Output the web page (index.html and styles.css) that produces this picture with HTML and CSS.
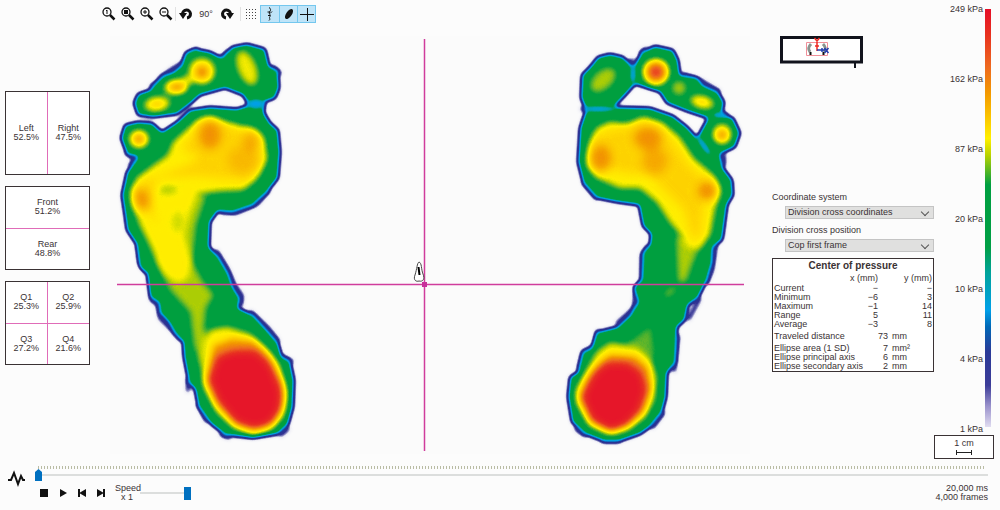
FILE: index.html
```html
<!DOCTYPE html>
<html lang="en">
<head>
<meta charset="utf-8">
<title>Foot pressure viewer</title>
<link rel="stylesheet" href="styles.css">
</head>
<body>
<div class="app">
  <main class="workspace">
    <div class="toolbar" role="toolbar" aria-label="View tools">
      <button class="tool" aria-label="Actual size"><svg viewBox="0 0 16 16"><circle cx="6" cy="6" r="4"/><path d="M5 5l1-1v4"/><path class="thick" d="M9 9l4.500 4.500"/></svg></button>
      <button class="tool" aria-label="Fit to window"><svg viewBox="0 0 16 16"><circle cx="6" cy="6" r="4"/><path class="solid" d="M4 4h4v4h-4z"/><path class="thick" d="M9 9l4.500 4.500"/></svg></button>
      <button class="tool" aria-label="Zoom in"><svg viewBox="0 0 16 16"><circle cx="6" cy="6" r="4"/><path d="M4 6h4M6 4v4"/><path class="thick" d="M9 9l4.500 4.500"/></svg></button>
      <button class="tool" aria-label="Zoom out"><svg viewBox="0 0 16 16"><circle cx="6" cy="6" r="4"/><path d="M4 6h4"/><path class="thick" d="M9 9l4.500 4.500"/></svg></button>
      <span class="divider"></span>
      <button class="tool" aria-label="Rotate left"><svg viewBox="0 0 16 16"><path class="turn" d="M4.500 8a4 4 0 1 1 4.500 4"/><path class="solid" d="M1 7h8l-4 6z"/></svg></button>
      <span class="angle">90°</span>
      <button class="tool" aria-label="Rotate right"><svg viewBox="0 0 16 16"><path class="turn" d="M11.500 8a4 4 0 1 0 -4.500 4"/><path class="solid" d="M15 7h-8l4 6z"/></svg></button>
      <span class="divider"></span>
      <button class="tool" aria-label="Show grid"><svg viewBox="0 0 16 16"><path class="dots" d="M3 3.500h12M3 6.500h12M3 9.500h12M3 12.500h12"/></svg></button>
      <div class="toggles">
        <button class="toggle" aria-pressed="true" aria-label="Show trajectory"><svg viewBox="0 0 16 16"><path d="M7 1.500c2 1 2 3 .5 4.500s2 3 .5 4.500 1 2.500-1 4M5.500 6h2.500M10 5.500l-2 2M6 9.500h2"/></svg></button>
        <button class="toggle" aria-pressed="true" aria-label="Show ellipse"><svg viewBox="0 0 16 16"><ellipse class="solid" cx="8" cy="8" rx="2.800" ry="5.800" transform="rotate(35 8 8)"/></svg></button>
        <button class="toggle" aria-pressed="true" aria-label="Show division cross"><svg viewBox="0 0 16 16"><path d="M1 8.500h14M8.500 2v13"/></svg></button>
      </div>
    </div>

    <aside class="shares">
      <section class="share columns"><p>Left<br>52.5%</p><p>Right<br>47.5%</p></section>
      <section class="share rows"><p>Front<br>51.2%</p><p>Rear<br>48.8%</p></section>
      <section class="share quads"><p>Q1<br>25.3%</p><p>Q2<br>25.9%</p><p>Q3<br>27.2%</p><p>Q4<br>21.6%</p></section>
    </aside>

    <svg class="stage" viewBox="110 36 640 418" role="img" aria-label="Pressure map of both feet">
      <defs>
        <filter id="palette" x="0" y="0" width="1" height="1" color-interpolation-filters="sRGB">
          <feComponentTransfer>
            <feFuncR type="table" tableValues=".988 .93 .5 .2 .16 .14 .05 0 0 0 0 0 .37 .72 1 1 .98 .953 .933 .91 .902"/>
            <feFuncG type="table" tableValues=".988 .93 .5 .2 .2 .22 .45 .63 .64 .624 .624 .624 .71 .82 .94 .85 .745 .596 .416 .19 .07"/>
            <feFuncB type="table" tableValues=".988 .96 .74 .58 .57 .6 .76 .91 .7 .27 .25 .25 .17 0 0 0 0 0 .12 .13 .17"/>
          </feComponentTransfer>
        </filter>
        <filter id="edge" x="-.1" y="-.1" width="1.200" height="1.200" color-interpolation-filters="sRGB"><feGaussianBlur stdDeviation="2.300"/></filter>
        <filter id="soft" x="-1" y="-1" width="3" height="3" color-interpolation-filters="sRGB"><feGaussianBlur stdDeviation="3"/></filter>
        <filter id="softer" x="-1" y="-1" width="3" height="3" color-interpolation-filters="sRGB"><feGaussianBlur stdDeviation="5"/></filter>
      </defs>
      <g filter="url(#palette)">
        <rect x="110" y="36" width="640" height="418" fill="#000"/>
        <g class="fringe" filter="url(#edge)">
          <path d="M150 87L158 82 161 77 172 69 184 62 187 54 198 49M221 58L229 51M272 66L281 74M126 152L135 160 129 166M138 244L140 262 147 273M150 298L158 305 160 318 172 330 181 340M188 378V392M198 404L207 422M220 434L230 438M269 190L257 204 236 213 220 212M216 250L228 270 234 284 242 296 241 306M250 311L268 328 279 342M282 356L293 362M289 428L280 436M628 62L634 60M640 54L646 48M682 74L702 81 720 92M724 154L724 166M716 244L712 270 706 284M700 298L688 320M678 335L674 372M664 412L652 428M602 441H620M575 428L586 436M579 370L583 352 595 346 598 330M616 324L634 308 636 290 642 280 642 255 648 246M583 182L597 199"/>
        </g>
        <g filter="url(#edge)" fill="#878787" fill-rule="evenodd">
          <path d="M134 103L138 94 150 90 153 86 160 79 163 76 173 72 182 65 186 53 195 49 210 52 222 58 232 47 247 44 265 49 269 66 278 71 279 88 275 98 264 102 264 113 270 123 278 130 280 152 278 178 267 192 253 205 233 212 218 211 210 222 209 247 218 256 228 273 233 287 240 298 238 308 253 315 267 330 278 343 282 357 290 361 294 380 293 407 288 425 278 434 253 438 225 435 210 423 198 405 195 389 189 383 184 357 183 342 175 333 169 323 160 313 159 303 150 297 147 273 140 267 137 245 127 230 125 215 122 195 127 172 138 157 127 154 121 138 125 125 138 122 152 123 162 132 177 122 190 110 210 107 237 109 249 105 243 95 225 88 200 95 190 104 177 114 153 117 138 115Z"/>
          <path d="M582 75L590 67 598 57 610 54 623 57 633 67 642 52 655 46 673 50 678 60 680 75 697 78 703 85 718 92 724 102 722 114 733 118 740 133 735 147 720 154 723 168 732 180 733 195 727 205 723 235 722 240 713 247 712 263 707 280 698 298 688 305 685 320 677 327 676 347 675 363 667 373 666 397 662 412 650 427 640 434 620 441 603 441 585 434 572 422 568 397 570 377 578 372 583 352 592 348 597 332 617 327 630 315 638 302 634 287 642 280 643 253 650 244 651 234 643 226 639 205 617 202 597 198 583 182 578 162 580 128 586 110 581 98ZM614 107L650 108 673 116 687 127 697 138 708 118 687 111 667 103 660 92 635 84 628 92Z"/>
        </g>
        <g class="joints" filter="url(#edge)">
          <ellipse cx="256" cy="104" rx="9" ry="5"/>
          <ellipse cx="598" cy="109" rx="18" ry="3"/>
          <ellipse cx="633" cy="74" rx="3" ry="10"/>
          <ellipse cx="720" cy="115" rx="8" ry="3"/>
          <ellipse cx="704" cy="146" rx="3" ry="12" transform="rotate(-35 704 146)"/>
        </g>
        <g class="mild" filter="url(#soft)">
          <path d="M190 190L206 196 196 225 192 262 203 282 214 295 206 308 204 330 214 340 201 365 194 345 190 312 170 290 158 262 175 215Z"/>
          <ellipse class="bright" cx="247" cy="68" rx="9" ry="18" transform="rotate(-22 247 68)"/>
          <ellipse cx="603" cy="80" rx="15" ry="9" transform="rotate(-42 603 80)"/>
          <circle cx="679" cy="88" r="7"/>
          <path d="M676 235L702 240 692 265 686 282 678 282Z"/>
          <ellipse class="faint" cx="670" cy="292" rx="8" ry="4" transform="rotate(-35 670 292)"/>
          <path class="faint" d="M625 345L651 326 655 358Z"/>
        </g>
        <g class="warm" filter="url(#soft)">
          <path d="M198 120L210 117 223 123 250 128 263 138 267 158 257 178 243 190 220 191 197 194 190 212 184 235 191 262 188 278 178 283 165 275 157 262 150 245 140 225 133 205 132 190 137 178 150 168 168 155 173 142Z"/>
          <path d="M210 330L227 327 250 334 266 348 279 365 286 393 282 416 270 429 253 434 234 427 217 412 204 387 201 363 204 343Z"/>
          <path d="M590 145L597 128 610 122 627 125 643 117 663 123 680 138 693 158 713 175 720 190 715 208 710 235 700 248 688 248 681 235 670 222 657 202 640 188 620 188 597 178 588 165Z"/>
          <path d="M597 352L610 343 637 347 650 357 656 377 654 400 645 417 627 429 610 433 590 425 577 403 576 390 587 370Z"/>
          <circle cx="202" cy="71" r="13"/>
          <path d="M168 85L195 72 198 80 172 92Z"/>
          <ellipse cx="176" cy="87" rx="12" ry="7" transform="rotate(-10 176 87)"/>
          <ellipse cx="157" cy="104" rx="13" ry="7" transform="rotate(-8 157 104)"/>
          <ellipse cx="139" cy="139" rx="10" ry="9"/>
          <circle cx="656" cy="72" r="13"/>
          <ellipse cx="702" cy="102" rx="12" ry="6" transform="rotate(15 702 102)"/>
          <ellipse cx="722" cy="134" rx="9" ry="10"/>
        </g>
        <g class="mild" filter="url(#soft)">
          <ellipse cx="168" cy="190" rx="9" ry="4"/>
          <ellipse cx="196" cy="154" rx="4" ry="4" opacity=".5"/>
          <ellipse cx="178" cy="222" rx="6" ry="10" opacity=".6"/>
        </g>
        <g class="gold" filter="url(#softer)">
          <path d="M200 125L222 123 258 139 261 163 247 181 195 176 158 178 150 200 158 225 150 215 138 200 142 182 180 168 198 160 182 148Z"/>
          <path d="M594 137L612 130 645 123 672 140 690 167 713 184 704 205 700 238 692 238 684 210 650 176 620 172 593 164Z"/>
        </g>
        <g class="orange" filter="url(#softer)">
          <ellipse cx="210" cy="135" rx="12" ry="15"/>
          <ellipse cx="251" cy="141" rx="9" ry="11" opacity=".7"/>
          <ellipse cx="243" cy="160" rx="16" ry="14" opacity=".5"/>
          <ellipse cx="142" cy="199" rx="8" ry="12" transform="rotate(-15 142 199)"/>
          <ellipse cx="601" cy="158" rx="11" ry="14"/>
          <ellipse cx="648" cy="138" rx="15" ry="12"/>
          <ellipse cx="655" cy="161" rx="14" ry="14" opacity=".7"/>
          <circle cx="707" cy="191" r="10"/>
        </g>
        <g class="orange" filter="url(#soft)">
          <circle cx="202" cy="72" r="7"/>
          <ellipse cx="177" cy="87" rx="8" ry="4"/>
          <ellipse cx="157" cy="104" rx="6" ry="3" opacity=".5"/>
          <circle cx="139" cy="139" r="5"/>
          <circle cx="707" cy="191" r="5" opacity=".6"/>
          <circle cx="656" cy="72" r="9"/>
          <circle cx="722" cy="135" r="5"/>
          <ellipse cx="702" cy="102" rx="5" ry="2" opacity=".5"/>
          <path d="M213 345L232 338 253 341 268 356 281 382 282 402 273 422 254 428 237 423 217 402 208 380Z"/>
          <path d="M597 366L610 354 636 356 648 367 651 388 643 410 626 424 611 429 592 420 581 397 586 382Z"/>
        </g>
        <g class="hot" filter="url(#softer)">
          <circle cx="656" cy="72" r="7" opacity=".8"/>
          <path d="M217 356L234 350 256 350 270 363 282 390 281 410 269 425 254 429 236 423 219 403 208 380Z"/>
          <path d="M593 374L606 362 628 362 642 372 647 390 640 411 627 425 611 431 592 421 581 397Z"/>
        </g>
      </g>
      <g class="cross">
        <path d="M117 284.500H744M424.500 39V451"/>
        <rect x="422" y="282" width="5" height="5"/>
      </g>
      <path class="cop" d="M419 262C417 263 417 269 415 275C413 280 416 282 419 281C423 282 425 279 423 274C421 269 422 263 419 262Z"/>
      <path class="cop-track" d="M418.500 267l1 8"/>
    </svg>

    <section class="panel">
      <svg class="minimap" viewBox="0 0 84 34" role="img" aria-label="Sensor plate overview">
        <path class="plate" d="M2.500 3.500h80v24.500h-80z"/>
        <path class="pin" d="M76 28v6"/>
        <path class="area" d="M27.500 8.500h21v13h-21z"/>
        <path class="prints" d="M32 10c-3 3-3 5-1 8M44 10c3 3 3 5 1 8"/>
        <path class="heels" d="M31.500 18v3M44.500 18v3"/>
        <path class="y-axis" d="M38 17V8M35.500 4l2.500 3 2.500-3M36 12h4"/>
        <path class="x-axis" d="M38 16h8M43 14v4M45.500 14l4 5M49.500 14l-4 5"/>
      </svg>

      <div class="field">
        <label for="coords">Coordinate system</label>
        <span class="picker"><select id="coords"><option>Division cross coordinates</option></select></span>
      </div>
      <div class="field">
        <label for="position">Division cross position</label>
        <span class="picker"><select id="position"><option>Cop first frame</option></select></span>
      </div>

      <div class="pressure">
        <table class="axes">
          <caption>Center of pressure</caption>
          <thead><tr><td></td><th scope="col">x (mm)</th><th scope="col">y (mm)</th></tr></thead>
          <tbody>
            <tr><th scope="row">Current</th><td>−</td><td>−</td></tr>
            <tr><th scope="row">Minimum</th><td>−6</td><td>3</td></tr>
            <tr><th scope="row">Maximum</th><td>−1</td><td>14</td></tr>
            <tr><th scope="row">Range</th><td>5</td><td>11</td></tr>
            <tr><th scope="row">Average</th><td>−3</td><td>8</td></tr>
          </tbody>
        </table>
        <table class="totals">
          <colgroup><col class="name"><col class="amount"><col></colgroup>
          <tbody><tr><th scope="row">Traveled distance</th><td>73</td><td>mm</td></tr></tbody>
          <tbody>
            <tr><th scope="row">Ellipse area (1 SD)</th><td>7</td><td>mm²</td></tr>
            <tr><th scope="row">Ellipse principal axis</th><td>6</td><td>mm</td></tr>
            <tr><th scope="row">Ellipse secondary axis</th><td>2</td><td>mm</td></tr>
          </tbody>
        </table>
      </div>
    </section>

    <section class="legend">
      <div class="levels">
        <ul class="marks"><li>249 kPa</li><li>162 kPa</li><li>87 kPa</li><li>20 kPa</li><li>10 kPa</li><li>4 kPa</li><li>1 kPa</li></ul>
        <div class="bar"></div>
      </div>
      <div class="scale">1 cm<span class="ruler"></span></div>
    </section>
  </main>

  <footer class="player">
    <svg class="wave" viewBox="0 0 20 18" aria-hidden="true"><path d="M1 11h3l3-7 4 11 3-8 2 4h2"/></svg>
    <div class="timeline">
      <div class="ticks"></div>
      <input class="scrub" type="range" min="0" max="4000" value="0" aria-label="Frame">
      <div class="controls">
        <button class="key" aria-label="Stop"><svg viewBox="0 0 10 10"><path d="M1 1h8v8h-8z"/></svg></button>
        <button class="key" aria-label="Play"><svg viewBox="0 0 10 10"><path d="M2 1l7 4-7 4z"/></svg></button>
        <button class="key" aria-label="Previous"><svg viewBox="0 0 10 10"><path d="M1 1h2v3.500l6-3.500v8l-6-3.500v3.500h-2z"/></svg></button>
        <button class="key" aria-label="Next"><svg viewBox="0 0 10 10"><path d="M9 1h-2v3.500l-6-3.500v8l6-3.500v3.500h2z"/></svg></button>
        <label class="speed-label" for="speed">Speed<br>x 1</label>
        <input class="speed" id="speed" type="range" min="0" max="10" value="10">
        <p class="duration">20,000 ms<br>4,000 frames</p>
      </div>
    </div>
  </footer>
</div>
</body>
</html>
```
FILE: styles.css
```css
* { box-sizing: border-box; }

body {
  margin: 0;
  background: #fcfcfc;
  color: #3a3234;
  font: 9px/9px "Liberation Sans", sans-serif;
}

p, ul { margin: 0; padding: 0; list-style: none; }
button, input, select { font: inherit; color: inherit; margin: 0; padding: 0; border: 0; background: none; }

.workspace {
  display: grid;
  grid-template-columns: 85px minmax(0, 1fr) 162px 60px;
  grid-template-rows: 36px auto;
  padding: 0 6px 0 5px;
}

/* Toolbar */
.toolbar { grid-column: 1 / 3; display: flex; align-items: center; height: 28px; padding-left: 94px; }
.tool, .toggle { display: grid; place-items: center; width: 19px; height: 18px; }
.tool svg, .toggle svg { width: 16px; height: 16px; fill: none; stroke: #111; stroke-width: 1; }
.tool circle { stroke-width: 1.3; }
.toolbar .thick { stroke-width: 2.5; }
.toolbar .turn { stroke-width: 3; }
.toolbar .solid { fill: #111; stroke: none; }
.toolbar .dots { stroke: #444; stroke-dasharray: 1 2; }
.divider { width: 1px; height: 14px; background: #e2e2e2; }
.angle { width: 22px; text-align: center; }
.angle + .tool { margin-right: 4px; }
.toggles { display: flex; border: 1px solid #74c7ee; background: #bfe4f8; }
.toggle { width: 18px; height: 16px; }
.toggle + .toggle { border-left: 1px solid #74c7ee; }

/* Load shares */
.shares { display: flex; flex-direction: column; gap: 11px; padding-top: 55px; }
.share { display: grid; height: 84px; border: 1px solid #3a3234; background: #fff; text-align: center; }
.share p { display: grid; place-content: center; }
.columns, .quads { grid-template-columns: 1fr 1fr; }
.columns p:first-child, .quads p:nth-child(odd) { border-right: 1px solid #e06cb8; }
.rows p:first-child, .quads p:nth-child(-n+2) { border-bottom: 1px solid #e06cb8; }

/* Pressure map */
.stage { width: calc(100% - 42px); height: auto; margin-left: 20px; }
.fringe { fill: none; stroke: #464646; stroke-width: 3; }
.joints { fill: #585858; }
.warm { fill: #b4b4b4; }
.mild { fill: #a4a4a4; }
.mild .bright { fill: #b0b0b0; }
.mild .faint { fill: #999; }
.gold { fill: #c2c2c2; }
.orange { fill: #dadada; }
.hot { fill: #fdfdfd; }
.cross path { fill: none; stroke: #d03c9c; stroke-width: 1.5; }
.cross rect { fill: #c8309a; }
.cop { fill: #fff; stroke: #444; }
.cop-track { fill: none; stroke: #000; stroke-width: 2; }

/* Readouts */
.panel { grid-column: 3; grid-row: 1 / 3; padding-top: 34px; }
.minimap { display: block; width: 84px; height: 34px; margin: 0 0 124px 7px; fill: none; }
.plate { fill: #fff; stroke: #11131c; stroke-width: 3; }
.pin { stroke: #11131c; stroke-width: 2; }
.area { stroke: #f0909a; }
.prints { stroke: #8a9490; stroke-width: 3; }
.heels { stroke: #111; stroke-width: 2; }
.y-axis { stroke: #ee2a24; stroke-width: 1.5; }
.x-axis { stroke: #2440b0; stroke-width: 1.5; }

.field { margin-bottom: 6px; }
.field label { display: block; height: 14px; line-height: 11px; }
.picker { position: relative; display: block; margin-left: 13px; }
.picker::after {
  content: "";
  position: absolute;
  right: 6px;
  top: 3px;
  width: 5px;
  height: 5px;
  border: solid #555;
  border-width: 0 1px 1px 0;
  transform: rotate(45deg);
  pointer-events: none;
}
.picker select { appearance: none; display: block; width: 100%; height: 13px; padding: 0 2px; border: 1px solid #c4c4c4; background: #e0e0df; line-height: 11px; }

.pressure { border: 1px solid #3a3234; background: #fff; margin-top: 5px; }
.pressure table { width: 100%; border-collapse: collapse; table-layout: fixed; }
.pressure caption { font-size: 10px; font-weight: 700; line-height: 13px; }
.pressure th, .pressure td { padding: 0 1px; font-weight: 400; text-align: right; white-space: nowrap; line-height: 9px; }
.pressure th[scope="row"] { text-align: left; }
.axes th:first-child, .axes td:first-child { width: 52px; }
.pressure .axes thead th { line-height: 12px; }
.totals .name { width: 96px; }
.totals .amount { width: 20px; }
.pressure .totals td:last-child { text-align: left; padding-left: 3px; }
.pressure .totals tbody:first-of-type > tr > * { line-height: 15px; }

/* Colour legend */
.legend { grid-column: 4; grid-row: 1 / 3; display: flex; flex-direction: column; padding-top: 3px; }
.levels { display: flex; justify-content: flex-end; gap: 2px; height: 432px; padding-right: 3px; }
.marks { display: flex; flex-direction: column; justify-content: space-between; text-align: right; line-height: 12px; white-space: nowrap; }
.bar {
  width: 6px;
  margin: 6px 0 8px;
  background: linear-gradient(#e60f28 0%, #e8301f 6%, #ee6a1f 14%, #f39800 20%, #fabe00 25%, #fff000 31%, #b8d200 35%, #009f40 42%, #009f45 57%, #00a39a 63%, #00a0e9 72%, #0068b7 76%, #2a3a98 82%, #3c3c98 90%, #9a92cc 95%, #e0dcf0 100%);
}
.scale { height: 24px; padding-top: 3px; border: 1px solid #3a3234; background: #fff; text-align: center; }
.ruler { display: block; width: 16px; height: 5px; margin: 2px auto 0; border: solid #222; border-width: 0 1px; background: linear-gradient(#222, #222) center / 100% 1px no-repeat; }

/* Playback */
.player { display: flex; padding: 7px 12px 0 7px; }
.wave { flex: none; width: 20px; height: 18px; margin: 3px 8px 0 0; fill: none; stroke: #111; stroke-width: 2; }
.timeline { flex: 1; }
.ticks { height: 3px; margin: 0 2px 0 3px; background: repeating-linear-gradient(90deg, #b9bca4 0 1px, transparent 1px 3px); }
.scrub, .speed { appearance: none; display: block; }
.scrub { width: 100%; height: 12px; background: linear-gradient(#dcdedd, #dcdedd) center / 100% 2px no-repeat; }
.scrub::-webkit-slider-thumb { appearance: none; width: 7px; height: 12px; background: #0070c0; clip-path: polygon(50% 0, 100% 25%, 100% 100%, 0 100%, 0 25%); }
.controls { display: flex; align-items: center; padding-left: 4px; margin-top: 3px; }
.key { width: 10px; height: 10px; margin-right: 9px; }
.key svg { display: block; width: 10px; height: 10px; fill: #111; }
.speed-label { width: 24px; margin-right: 1px; text-align: center; }
.speed { width: 51px; height: 14px; background: linear-gradient(#dcdedd, #dcdedd) center / 100% 2px no-repeat; }
.speed::-webkit-slider-thumb { appearance: none; width: 7px; height: 13px; background: #0070c0; }
.duration { margin-left: auto; text-align: right; }
```
